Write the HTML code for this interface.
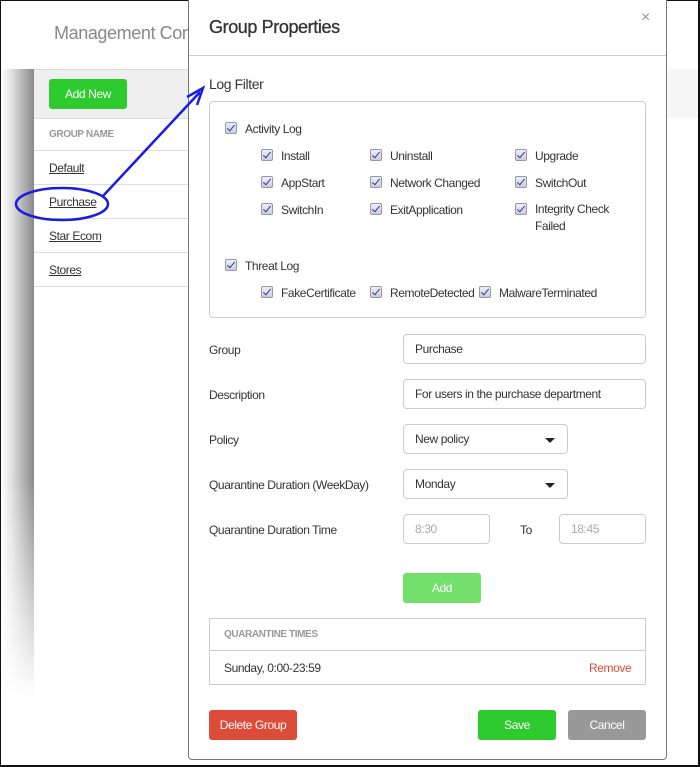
<!DOCTYPE html>
<html><head><meta charset="utf-8"><style>
*{box-sizing:border-box;margin:0;padding:0}
body{width:700px;height:767px;position:relative;overflow:hidden;background:#fff;font-family:"Liberation Sans",sans-serif;font-size:12px;color:#333;letter-spacing:-0.4px}
.a{position:absolute}
.cb{position:absolute;width:12px;height:12px;border:1px solid #999;background:linear-gradient(#eef,#ccd);border-radius:2px}
.cb:after{content:"";position:absolute;left:3px;top:0px;width:3px;height:7px;border:solid #2a3a9a;border-width:0 1.5px 1.5px 0;transform:rotate(40deg)}
.lbl{position:absolute;font-size:12px;color:#333}
.inp{position:absolute;border:1px solid #ccc;border-radius:4px;background:#fff;padding-left:11px;font-size:12px;color:#333;display:flex;align-items:center}
.caret{position:absolute;right:12px;top:13px;border-left:5px solid transparent;border-right:5px solid transparent;border-top:5px solid #222}
.btn{position:absolute;border-radius:3px;color:#fff;font-size:12px;display:flex;align-items:center;justify-content:center}
.row{position:absolute;left:34px;width:156px;border-bottom:1px solid #ddd;height:34px}
.row span{position:absolute;left:15px;top:10px;text-decoration:underline;color:#333}
</style></head><body>
<div class="a" style="left:0;top:0;width:700px;height:767px;border:2px solid #111;border-width:1px 2px 2px 1px"></div>
<div class="a" style="left:54px;top:23px;font-size:18px;color:#888">Management Con</div>
<div class="a" style="left:1px;top:69px;width:188px;border-top:1px solid #ddd"></div>
<div class="a" style="left:1px;top:69px;width:33px;height:628px;background:linear-gradient(90deg,#fff,#ddd 35%,#888 100%);-webkit-mask:linear-gradient(#000 65%,transparent);mask:linear-gradient(#000 65%,transparent)"></div>
<div class="a" style="left:34px;top:70px;width:156px;height:49px;background:#efefef;border-bottom:1px solid #ddd"></div>
<div class="btn" style="left:49px;top:79px;width:78px;height:30px;background:#2ecb2e">Add New</div>
<div class="a" style="left:49px;top:129px;font-size:10px;font-weight:bold;color:#999">GROUP NAME</div>
<div class="a" style="left:34px;top:150px;width:156px;border-top:1px solid #ddd"></div>
<div class="row" style="top:151px"><span>Default</span></div>
<div class="row" style="top:185px"><span>Purchase</span></div>
<div class="row" style="top:219px"><span>Star Ecom</span></div>
<div class="row" style="top:253px"><span>Stores</span></div>
<div class="a" style="left:667px;top:69px;width:31px;height:49px;background:#f7f7f7"></div>
<div class="a" style="left:188px;top:0;width:479px;height:760px;background:#fff;border:1px solid #777;border-top:none;border-radius:0 0 4px 4px"></div>
<div class="a" style="left:209px;top:17px;font-size:18px;color:#333;-webkit-text-stroke:0.3px #333">Group Properties</div>
<div class="a" style="left:641px;top:9px;font-size:16px;color:#999">×</div>
<div class="a" style="left:189px;top:55px;width:477px;border-top:1px solid #ccc"></div>
<div class="a" style="left:209px;top:76px;font-size:14px;color:#333">Log Filter</div>
<div class="a" style="left:209px;top:101px;width:437px;height:217px;border:1px solid #ccc;border-radius:4px"></div>
<div class="cb" style="left:225px;top:122px"></div><div class="lbl" style="left:245px;top:122px">Activity Log</div>
<div class="cb" style="left:261px;top:149px"></div><div class="lbl" style="left:281px;top:149px">Install</div>
<div class="cb" style="left:370px;top:149px"></div><div class="lbl" style="left:390px;top:149px">Uninstall</div>
<div class="cb" style="left:515px;top:149px"></div><div class="lbl" style="left:535px;top:149px">Upgrade</div>
<div class="cb" style="left:261px;top:176px"></div><div class="lbl" style="left:281px;top:176px">AppStart</div>
<div class="cb" style="left:370px;top:176px"></div><div class="lbl" style="left:390px;top:176px">Network Changed</div>
<div class="cb" style="left:515px;top:176px"></div><div class="lbl" style="left:535px;top:176px">SwitchOut</div>
<div class="cb" style="left:261px;top:203px"></div><div class="lbl" style="left:281px;top:203px">SwitchIn</div>
<div class="cb" style="left:370px;top:203px"></div><div class="lbl" style="left:390px;top:203px">ExitApplication</div>
<div class="cb" style="left:515px;top:203px"></div><div class="lbl" style="left:535px;line-height:17px;top:201px">Integrity Check<br>Failed</div>
<div class="cb" style="left:225px;top:259px"></div><div class="lbl" style="left:245px;top:259px">Threat Log</div>
<div class="cb" style="left:261px;top:286px"></div><div class="lbl" style="left:281px;top:286px">FakeCertificate</div>
<div class="cb" style="left:370px;top:286px"></div><div class="lbl" style="left:390px;top:286px">RemoteDetected</div>
<div class="cb" style="left:479px;top:286px"></div><div class="lbl" style="left:499px;top:286px">MalwareTerminated</div>
<div class="lbl" style="left:209px;top:343px">Group</div>
<div class="inp" style="left:403px;top:334px;width:243px;height:30px">Purchase</div>
<div class="lbl" style="left:209px;top:388px">Description</div>
<div class="inp" style="left:403px;top:379px;width:243px;height:30px">For users in the purchase department</div>
<div class="lbl" style="left:209px;top:433px">Policy</div>
<div class="inp" style="left:403px;top:424px;width:165px;height:30px">New policy<div class="caret"></div></div>
<div class="lbl" style="left:209px;top:478px">Quarantine Duration (WeekDay)</div>
<div class="inp" style="left:403px;top:469px;width:165px;height:30px">Monday<div class="caret"></div></div>
<div class="lbl" style="left:209px;top:523px">Quarantine Duration Time</div>
<div class="inp" style="left:403px;top:514px;width:87px;height:30px;color:#aaa">8:30</div>
<div class="lbl" style="left:520px;top:523px">To</div>
<div class="inp" style="left:559px;top:514px;width:87px;height:30px;color:#aaa">18:45</div>
<div class="btn" style="left:403px;top:573px;width:78px;height:30px;background:#72e06a">Add</div>
<div class="a" style="left:209px;top:618px;width:437px;height:67px;border:1px solid #ccc"></div>
<div class="a" style="left:209px;top:650px;width:437px;border-top:1px solid #ccc"></div>
<div class="a" style="left:224px;top:629px;font-size:10px;font-weight:bold;color:#999">QUARANTINE TIMES</div>
<div class="lbl" style="left:224px;top:661px">Sunday, 0:00-23:59</div>
<div class="lbl" style="left:589px;top:661px;color:#e04a3a">Remove</div>
<div class="btn" style="left:209px;top:710px;width:88px;height:30px;background:#dd4b39">Delete Group</div>
<div class="btn" style="left:478px;top:710px;width:78px;height:30px;background:#2ecb2e">Save</div>
<div class="btn" style="left:568px;top:710px;width:78px;height:30px;background:#999">Cancel</div>
<svg class="a" style="left:0;top:0" width="700" height="767">
<ellipse cx="62" cy="204" rx="46" ry="16" fill="none" stroke="#1a1ae6" stroke-width="2.5"/>
<line x1="103" y1="196" x2="200" y2="92" stroke="#1a1ae6" stroke-width="2.5"/>
<path d="M187 97 L203 88 L197 105" fill="none" stroke="#1a1ae6" stroke-width="2.5"/>
</svg>
</body></html>
